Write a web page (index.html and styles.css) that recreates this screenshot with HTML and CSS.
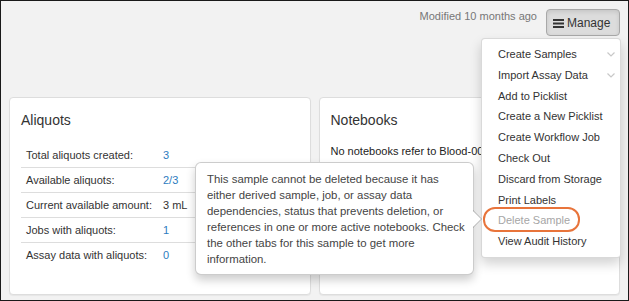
FILE: index.html
```html
<!DOCTYPE html>
<html lang="en">
<head>
    <meta charset="UTF-8">
    <meta name="viewport" content="width=device-width, initial-scale=1.0">
    <title>Sample - Manage</title>
    <link rel="stylesheet" href="styles.css">
</head>
<body>
    <div class="page">
        <!-- Header with last-modified and Manage menu -->
        <div class="topbar">
            <span class="modified">Modified 10 months ago</span>
            <div class="manage">
                <button type="button" class="manage-btn">
                    <svg class="bars" width="11" height="10" viewBox="0 0 11 10"><rect x="0" y="1" width="11" height="2"/><rect x="0" y="4.5" width="11" height="2"/><rect x="0" y="8" width="11" height="2"/></svg>Manage
                </button>
                <ul class="manage-menu">
                    <li class="has-sub">Create Samples<svg class="chev" width="8" height="5" viewBox="0 0 8 5"><polyline points="0.5,0.5 4,4 7.5,0.5"/></svg></li>
                    <li class="has-sub">Import Assay Data<svg class="chev" width="8" height="5" viewBox="0 0 8 5"><polyline points="0.5,0.5 4,4 7.5,0.5"/></svg></li>
                    <li>Add to Picklist</li>
                    <li>Create a New Picklist</li>
                    <li>Create Workflow Job</li>
                    <li>Check Out</li>
                    <li>Discard from Storage</li>
                    <li>Print Labels</li>
                    <li class="is-disabled">Delete Sample</li>
                    <li>View Audit History</li>
                </ul>
            </div>
        </div>

        <div class="panels">
            <section class="panel">
                <h3 class="panel-title">Aliquots</h3>
                <table class="detail-table">
                    <tr><td>Total aliquots created:</td><td><a href="#">3</a></td></tr>
                    <tr><td>Available aliquots:</td><td><a href="#">2/3</a></td></tr>
                    <tr><td>Current available amount:</td><td>3 mL</td></tr>
                    <tr><td>Jobs with aliquots:</td><td><a href="#">1</a></td></tr>
                    <tr><td>Assay data with aliquots:</td><td><a href="#">0</a></td></tr>
                </table>
            </section>
            <section class="panel">
                <h3 class="panel-title">Notebooks</h3>
                <p class="panel-text">No notebooks refer to Blood-0001.</p>
            </section>
        </div>

        <!-- Popover shown for the disabled delete item -->
        <div class="popover">
            This sample cannot be deleted because it has<br>
            either derived sample, job, or assay data<br>
            dependencies, status that prevents deletion, or<br>
            references in one or more active notebooks. Check<br>
            the other tabs for this sample to get more<br>
            information.
        </div>
    </div>
</body>
</html>
```

FILE: styles.css
```css
html, body { margin: 0; padding: 0; }
body { font-family: "Liberation Sans", Arial, sans-serif; font-size: 11px; color: #333; }
.page { position: relative; box-sizing: border-box; width: 629px; height: 301px; border: 1px solid #1a1a1a; background: #f2f2f2; padding: 8px 8px 0; overflow: hidden; }

.topbar { display: flex; justify-content: flex-end; align-items: flex-start; gap: 9px; height: 27px; }
.modified { color: #777; line-height: 15px; }
.manage { position: relative; }
.manage-btn { display: flex; align-items: center; gap: 3px; box-sizing: border-box; width: 74px; height: 27px; padding: 0 0 0 6px; font-family: inherit; font-size: 12px; color: #333; background: #dcdcdc; border: 1px solid #a8a8a8; border-radius: 4px; box-shadow: inset 0 2px 4px rgba(0,0,0,.1); }
.bars { fill: #333; }

.manage-menu { position: absolute; top: 29px; right: -1px; width: 140px; box-sizing: border-box; margin: 0; padding: 5px 0; list-style: none; background: #fff; border: 1px solid rgba(0,0,0,.15); border-radius: 4px; box-shadow: 0 6px 12px rgba(0,0,0,.175); z-index: 5; }
.manage-menu li { position: relative; padding: 0 16px; line-height: 20.8px; color: #333; white-space: nowrap; }
.manage-menu .chev { position: absolute; right: 5px; top: 8px; fill: none; stroke: #c8c8c8; stroke-width: 1.2; }
.manage-menu .is-disabled { color: #a6a6a6; }
.manage-menu .is-disabled::after { content: ""; position: absolute; left: 1px; top: -3px; width: 97px; height: 25px; box-sizing: border-box; border: 2px solid #e8743b; border-radius: 12px; }

.panels { display: grid; grid-template-columns: 1fr 1fr; gap: 8px; margin-top: 61px; }
.panel { box-sizing: border-box; height: 198px; background: #fff; border: 1px solid #ddd; border-radius: 4px; box-shadow: 0 1px 1px rgba(0,0,0,.05); padding: 0 11px; }
.panel-title { margin: 13px 0 0; font-size: 14px; font-weight: normal; line-height: 18px; color: #333; }
.detail-table { width: 100%; border-collapse: collapse; margin-top: 13px; }
.detail-table td { height: 24px; padding: 0 5px; border-top: 1px solid #ddd; color: #333; white-space: nowrap; }
.detail-table tr:first-child td { border-top: none; height: 25px; }
.detail-table td:first-child { width: 127px; }
.detail-table a { color: #2d7cc0; text-decoration: none; }
.panel-text { margin: 15px 0 0; line-height: 15px; color: #222; white-space: nowrap; }

.popover { position: absolute; left: 194px; top: 161px; width: 279px; box-sizing: border-box; padding: 8px 11px 7px; font-size: 11.4px; line-height: 16px; color: #444; white-space: nowrap; background: #fff; border: 1px solid rgba(0,0,0,.2); border-radius: 6px; box-shadow: 0 5px 10px rgba(0,0,0,.2); z-index: 6; }
.popover::before, .popover::after { content: ""; position: absolute; top: 50%; border-style: solid; border-color: transparent; }
.popover::before { right: -9px; margin-top: -9px; border-width: 9px 0 9px 9px; border-left-color: rgba(0,0,0,.25); }
.popover::after { right: -8px; margin-top: -8px; border-width: 8px 0 8px 8px; border-left-color: #fff; }
```
